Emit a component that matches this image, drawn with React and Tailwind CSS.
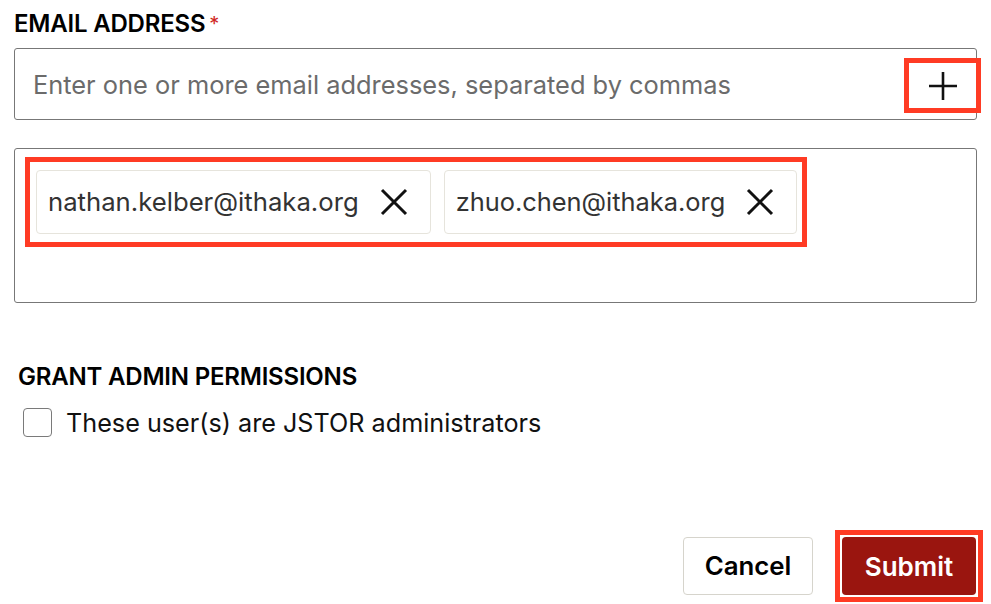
import React from "react";

const font = { fontFamily: "Inter, 'Liberation Sans', sans-serif" };

function Plus() {
  return (
    <svg width="30" height="30" viewBox="0 0 30 30" fill="none">
      <path d="M15 1V29M1 15H29" stroke="#111" strokeWidth="2.6" />
    </svg>
  );
}

function Cross() {
  return (
    <svg width="28" height="28" viewBox="0 0 28 28" fill="none">
      <path d="M2 2L26 26M26 2L2 26" stroke="#111" strokeWidth="3" />
    </svg>
  );
}

function Chip({ email, size }) {
  return (
    <div className="flex h-[64px] items-center rounded-[4px] border border-[#e6e4dc] bg-white pl-[11px] pr-[22px]">
      <span className={`${size} text-[#333333]`}>{email}</span>
      <span className="ml-[21px] flex items-center">
        <Cross />
      </span>
    </div>
  );
}

export default function App() {
  return (
    <div className="h-[604px] w-[991px] overflow-hidden bg-white text-black" style={font}>
      <div className="flex flex-col pl-[14px] pr-[14px] pt-[8px]">
        <div className="flex items-start text-[24px] font-semibold leading-[32px] tracking-[-0.2px]">
          EMAIL ADDRESS
          <span className="ml-[4px] text-[20px] font-normal text-[#d0261e]">*</span>
        </div>
        <div className="mt-[8px] flex h-[72px] items-center rounded-[3px] border border-[#777777] pl-[18px]">
          <span className="mt-[3px] flex-1 text-[25.4px] text-[#6b6b6b]">
            Enter one or more email addresses, separated by commas
          </span>
          <button className="-mr-[5px] mt-[3px] flex h-[55px] w-[77px] shrink-0 items-center justify-center border-[5px] border-[#ff3b24] bg-white">
            <Plus />
          </button>
        </div>
        <div className="mt-[28px] h-[155px] rounded-[3px] border border-[#777777] pl-[10px] pt-[8px]">
          <div className="inline-flex gap-[13px] border-[5px] border-[#ff3b24] py-[8px] pl-[6px] pr-[5px]">
            <Chip email="nathan.kelber@ithaka.org" size="text-[25.7px]" />
            <Chip email="zhuo.chen@ithaka.org" size="text-[25.4px]" />
          </div>
        </div>
        <div className="mt-[60px] pl-[4px] text-[24px] font-semibold leading-[28px] tracking-[-0.2px]">
          GRANT ADMIN PERMISSIONS
        </div>
        <label className="mt-[14px] flex items-center pl-[9px]">
          <span className="h-[29px] w-[29px] rounded-[4px] border-[1.5px] border-[#7a7a7a] bg-white" />
          <span className="ml-[14px] mt-[2px] text-[25.2px] leading-[32px] text-[#111]">
            These user(s) are JSTOR administrators
          </span>
        </label>
        <div className="mt-[91px] flex items-center justify-end">
          <button className="h-[58px] w-[130px] rounded-[4px] border border-[#d6d4cc] bg-white text-[25.8px] font-semibold text-black">
            Cancel
          </button>
          <div className="-mr-[6px] ml-[22px] border-[5px] border-[#ff3b24] bg-white p-[2px]">
            <button className="h-[58px] w-[134px] rounded-[4px] bg-[#9a150f] text-[26px] font-semibold text-white">
              Submit
            </button>
          </div>
        </div>
      </div>
    </div>
  );
}
